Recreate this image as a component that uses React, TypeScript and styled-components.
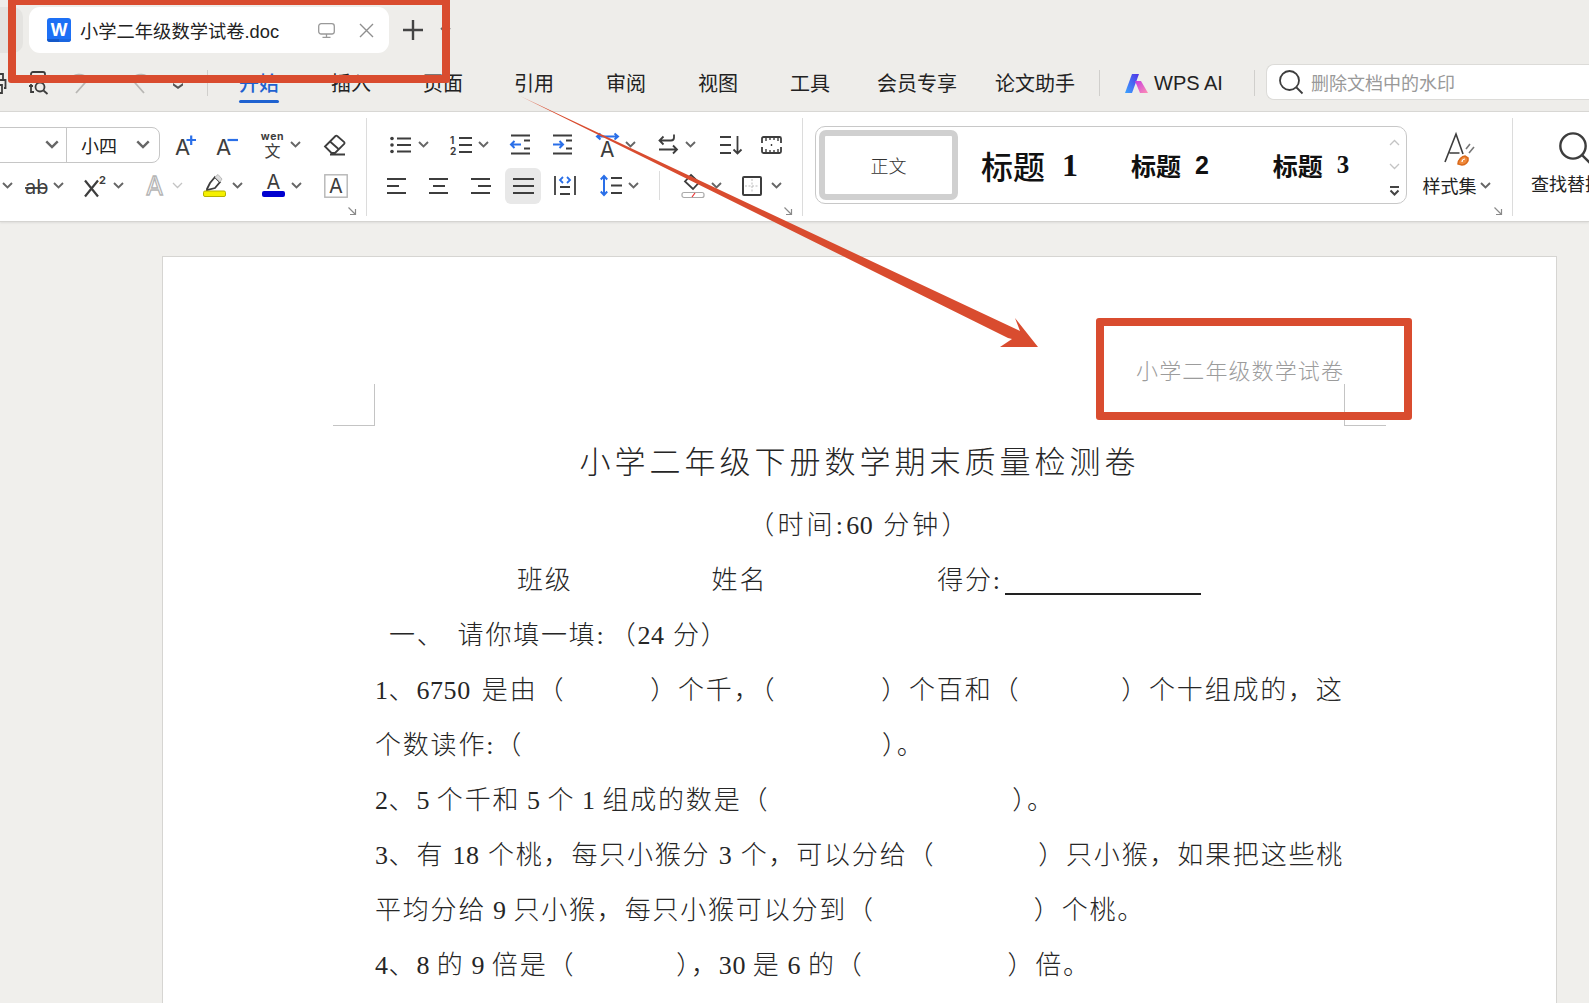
import React from "react";
import styled, { createGlobalStyle } from "styled-components";

const UI_FONT = `"Noto Sans CJK SC", "Liberation Sans", sans-serif`;
const DOC_FONT = `"Liberation Serif", "Noto Sans CJK SC", serif`;
const RED = "#d94c2f";
const INK = "#3d3d3d";
const BLUE = "#2a6fe8";

const GlobalStyle = createGlobalStyle`
  html, body { margin: 0; padding: 0; background: #f0efec; }
  body { font-family: ${UI_FONT}; overflow: hidden; }
  * { box-sizing: border-box; }
`;

/* ICONS */
const Svg = styled.svg`
  display: block;
  flex: none;
  overflow: visible;
  fill: none;
  stroke: ${INK};
  stroke-width: 1.8;
`;

const Chevron = ({ light, big, up }: { light?: boolean; big?: boolean; up?: boolean }) => (
  <Svg
    width={big ? 14 : 11}
    height={big ? 9 : 7}
    viewBox="0 0 11 7"
    style={{ stroke: light ? "#c4c4c4" : "#666", strokeWidth: light ? 1.3 : 1.9, transform: up ? "scaleY(-1)" : undefined }}
  >
    <path d="M1 1l4.5 4.5L10 1" />
  </Svg>
);

const LetterA = ({ size = 25, x = 0, y = 21, color = INK }: { size?: number; x?: number; y?: number; color?: string }) => (
  <text x={x} y={y} fontSize={size} fontFamily="Inter, sans-serif" fill={color} stroke="none">A</text>
);

const GrowIcon = () => (
  <Svg width="21" height="20" viewBox="0 0 21 20">
    <LetterA size={22} y={20} />
    <path d="M11.500 5h9.500M16.200 0.500v9.500" stroke={BLUE} strokeWidth="2.200" />
  </Svg>
);
const ShrinkIcon = () => (
  <Svg width="22" height="20" viewBox="0 0 22 20">
    <LetterA size={22} y={20} />
    <path d="M11.500 5h10.500" stroke={BLUE} strokeWidth="2.200" />
  </Svg>
);
const WenIcon = () => (
  <Svg width="23" height="24" viewBox="0 0 23 24">
    <text x="11.500" y="7" fontSize="10.500" fontWeight="700" letterSpacing="0.600" textAnchor="middle" fontFamily="Inter, sans-serif" fill={INK} stroke="none">wen</text>
    <text x="11.500" y="24" fontSize="16" textAnchor="middle" fontFamily={UI_FONT} fill={INK} stroke="none">文</text>
  </Svg>
);
const EraserIcon = () => (
  <Svg width="22" height="22" viewBox="0 0 22 22">
    <path d="M1 12.500L11.500 2a1.200 1.200 0 0 1 1.700 0l7 6.200a1.200 1.200 0 0 1 0 1.700L11 19H7.500z" />
    <path d="M6 7.500l8.500 7.500M6 20.500h15" />
  </Svg>
);
const ListIcon = () => (
  <Svg width="22" height="18" viewBox="0 0 22 18">
    <path d="M7 2.500h14M7 9h14M7 15.500h14" />
    <circle cx="2" cy="2.500" r="1.800" fill={INK} stroke="none" />
    <circle cx="2" cy="9" r="1.800" fill={INK} stroke="none" />
    <circle cx="2" cy="15.500" r="1.800" fill={INK} stroke="none" />
  </Svg>
);
const NumListIcon = () => (
  <Svg width="22" height="20" viewBox="0 0 22 20">
    <text x="0" y="9" fontSize="10" fontWeight="700" fontFamily="Inter, sans-serif" fill={INK} stroke="none">1</text>
    <text x="0" y="20" fontSize="10" fontWeight="700" fontFamily="Inter, sans-serif" fill={INK} stroke="none">2</text>
    <path d="M9 3h13M9 10h13M9 17h13" />
  </Svg>
);
const IndentIcon = ({ right }: { right?: boolean }) => (
  <Svg width="21" height="21" viewBox="0 0 21 21">
    <path d="M1 1.500h19M14 6.500h6M14 14.500h6M1 19.500h19" />
    {right ? (
      <path d="M1 10.500h10M7.500 7l3.500 3.500L7.500 14" stroke={BLUE} strokeWidth="2" />
    ) : (
      <path d="M11 10.500H1M4.500 7L1 10.500 4.500 14" stroke={BLUE} strokeWidth="2" />
    )}
  </Svg>
);
const TextDirIcon = () => (
  <Svg width="23" height="24" viewBox="0 0 23 24">
    <LetterA size={21} x={4} y={24} />
    <path d="M1 3.500h21M4.500 0.500L1 3.500l3.500 3M18.500 0.500l3.500 3-3.500 3" stroke={BLUE} strokeWidth="2" />
  </Svg>
);
const SwapIcon = () => (
  <Svg width="21" height="21" viewBox="0 0 21 21">
    <path d="M16 0.500v3a3 3 0 0 1-3 3H1.500M5.500 2.500l-4 4 4 4" />
    <path d="M1 15.500h18M15 11.500l4 4-4 4" />
  </Svg>
);
const SortIcon = () => (
  <Svg width="23" height="20" viewBox="0 0 23 20">
    <path d="M1 2h11M1 10h11M1 18h11M18.500 1v17.500M14.500 14.500l4 4 4-4" />
  </Svg>
);
const RulerIcon = () => (
  <Svg width="21" height="18" viewBox="0 0 21 18">
    <path d="M1 7V2.500A1.500 1.500 0 0 1 2.500 1h16A1.500 1.500 0 0 1 20 2.500V7M1 11v4.500A1.500 1.500 0 0 0 2.500 17h16a1.500 1.500 0 0 0 1.500-1.500V11" />
    <path d="M5 1v4M9 1v3M13 1v3M17 1v4M5 13v4M9 14v3M13 14v3M17 13v4M10.500 8v2" strokeWidth="1.400" />
  </Svg>
);
const AlignIcon = ({ mode }: { mode: "left" | "center" | "right" | "full" }) => {
  const mid = {
    left: "M1 9h12",
    center: "M5 9h12",
    right: "M8 9h13",
    full: "M1 9h21",
  }[mode];
  const w = mode === "full" ? 23 : 21;
  return (
    <Svg width={w} height="18" viewBox={`0 0 ${w} 18`} style={{ strokeWidth: 2 }}>
      <path d={`M1 2h${w - 2}M1 16h${w - 2}`} />
      <path d={mid} />
    </Svg>
  );
};
const DistributeIcon = () => (
  <Svg width="22" height="21" viewBox="0 0 22 21">
    <path d="M1 1v19M21 1v19M6 12h10M6 19h10" />
    <path d="M9 2L6 5l3 3M13 2l3 3-3 3" stroke={BLUE} />
  </Svg>
);
const LineSpaceIcon = () => (
  <Svg width="22" height="21" viewBox="0 0 22 21">
    <path d="M4 1v19M0.800 4.500L4 1l3.200 3.500M0.800 16.500L4 20l3.200-3.500" stroke={BLUE} strokeWidth="2" />
    <path d="M11 3h11M11 10.500h11M11 18h11" />
  </Svg>
);
const FillIcon = () => (
  <Svg width="24" height="24" viewBox="0 0 24 24">
    <path d="M10 1l8 7.500-6 6.500-8-7.500z" />
    <rect x="1" y="18.500" width="22" height="5" rx="2" stroke="#aaa" strokeWidth="1.200" />
    <path d="M14 19l-3 4" stroke="#e33" strokeWidth="1.200" />
  </Svg>
);
const BorderIcon = () => (
  <Svg width="20" height="20" viewBox="0 0 20 20" style={{ strokeWidth: 2 }}>
    <rect x="1" y="1" width="18" height="18" rx="1" />
    <path d="M10 3v14M3 10h14" stroke="#bbb" strokeWidth="1" strokeDasharray="2 1.500" />
  </Svg>
);
const StrikeIcon = () => (
  <Svg width="22" height="20" viewBox="0 0 22 20">
    <text x="0" y="18" fontSize="20" fontFamily="Inter, sans-serif" fill={INK} stroke="none">ab</text>
    <path d="M0 12h22" />
  </Svg>
);
const SuperIcon = () => (
  <Svg width="23" height="22" viewBox="0 0 23 22">
    <path d="M1 5.500l13 16M14 5.500l-13 16" strokeWidth="2.200" />
    <text x="15" y="9" fontSize="11" fontWeight="700" fontFamily="Inter, sans-serif" fill={INK} stroke="none">2</text>
  </Svg>
);
const OutlineAIcon = () => (
  <Svg width="20" height="22" viewBox="0 0 20 22">
    <text x="0" y="20" fontSize="25" fontFamily="Inter, sans-serif" fill="#fff" stroke="#b5b5b5" strokeWidth="1.300">A</text>
  </Svg>
);
const HighlightIcon = () => (
  <Svg width="23" height="23" viewBox="0 0 23 23">
    <path d="M4 15l3-6 5-6 5 5-5 6-8 2z" />
    <path d="M12 3l5 5 2-3-4-4.500z" fill="#ddd" stroke="#bbb" strokeWidth="1" />
    <rect x="0.500" y="17" width="22" height="5.500" rx="1.500" fill="#f5f000" stroke="#b6b000" strokeWidth="1" />
  </Svg>
);
const ColorAIcon = () => (
  <Svg width="23" height="23" viewBox="0 0 23 23">
    <LetterA size={20} x={4.500} y={15} />
    <rect x="0" y="17" width="23" height="6" rx="2" fill="#0000cf" stroke="none" />
  </Svg>
);
const BoxedAIcon = () => (
  <Svg width="24" height="24" viewBox="0 0 24 24">
    <rect x="0.800" y="0.800" width="22.400" height="22.400" stroke="#b5b5b5" strokeWidth="1.400" />
    <LetterA size={20} x={5} y={19} />
  </Svg>
);
const CornerIcon = () => (
  <Svg width="8" height="8" viewBox="0 0 8 8" style={{ stroke: "#8a8a8a", strokeWidth: 1.2 }}>
    <path d="M0.500 0.500l7 7M7.500 2v5.500H2" />
  </Svg>
);
const SearchIcon = ({ size = 24 }: { size?: number }) => (
  <Svg width={size} height={size} viewBox="0 0 24 24" style={{ strokeWidth: 1.8 }}>
    <circle cx="10.500" cy="10.500" r="9.500" />
    <path d="M17.500 17.500l6 6" />
  </Svg>
);
const WordLogo = () => (
  <Svg width="24" height="24" viewBox="0 0 24 24" style={{ stroke: "none" }}>
    <path d="M3 0h18a3 3 0 0 1 3 3v18a3 3 0 0 1-3 3H3a3 3 0 0 1-3-3V3a3 3 0 0 1 3-3z" fill="#1d70f5" />
    <path d="M0 21h12v3H3a3 3 0 0 1-3-3z" fill="#1458c8" />
    <path d="M12 21h12a3 3 0 0 1-3 3h-9z" fill="#1a66e0" />
    <text x="12" y="17.500" fontSize="17" fontWeight="700" textAnchor="middle" fontFamily="Inter, sans-serif" fill="#fff">W</text>
  </Svg>
);
const MonitorIcon = () => (
  <Svg width="17" height="15" viewBox="0 0 17 15" style={{ stroke: "#999", strokeWidth: 1.3 }}>
    <rect x="0.700" y="0.700" width="15.600" height="10.300" rx="2.500" />
    <path d="M8.500 11v3M4.500 14.300h8" />
  </Svg>
);
const CloseIcon = () => (
  <Svg width="15" height="15" viewBox="0 0 15 15" style={{ stroke: "#8f8f8f", strokeWidth: 1.4 }}>
    <path d="M1 1l13 13M14 1L1 14" />
  </Svg>
);
const PlusIcon = () => (
  <Svg width="20" height="20" viewBox="0 0 20 20" style={{ stroke: "#444", strokeWidth: 2.4 }}>
    <path d="M10 0v20M0 10h20" />
  </Svg>
);
const PrintIcon = () => (
  <Svg width="21" height="21" viewBox="0 0 21 21" style={{ marginLeft: -14 }}>
    <path d="M4 6V1h13v5M3 15H1.500V7h18v8H18M5 12h11v8H5z" />
  </Svg>
);
const PreviewIcon = () => (
  <Svg width="19" height="24" viewBox="0 0 19 24">
    <path d="M2 11V3A2 2 0 0 1 4 1h10a2 2 0 0 1 2 2v6" />
    <path d="M2 13v8h3M0 15h4" />
    <circle cx="11" cy="16" r="4.500" />
    <path d="M14.500 19.500l4 3.500" />
  </Svg>
);
const UndoIcon = ({ flip }: { flip?: boolean }) => (
  <Svg width="20" height="22" viewBox="0 0 20 22" style={{ stroke: "#b8b7b4", transform: flip ? "scaleX(-1)" : undefined }}>
    <path d="M1 7c2-5 12-6 16-1M17.500 8L6 21" />
  </Svg>
);
const TinyDown = () => (
  <Svg width="10" height="6" viewBox="0 0 10 6" style={{ stroke: "none", marginTop: 6 }}>
    <path d="M0 0l5 3.500L10 0v2.500L5 6 0 2.500z" fill="#555" />
  </Svg>
);
const AiLogo = () => (
  <Svg width="24" height="19" viewBox="0 0 24 19" style={{ stroke: "none" }}>
    <defs>
      <linearGradient id="aiA" x1="0" y1="1" x2="1" y2="0">
        <stop offset="0" stopColor="#3aa4ff" />
        <stop offset="1" stopColor="#5233e6" />
      </linearGradient>
      <linearGradient id="aiB" x1="0" y1="0" x2="1" y2="1">
        <stop offset="0" stopColor="#c43be0" />
        <stop offset="1" stopColor="#ff8fb4" />
      </linearGradient>
    </defs>
    <path d="M7 0h7L7 19H0z" fill="url(#aiA)" />
    <path d="M10 7h6l7 12h-8z" fill="url(#aiB)" />
  </Svg>
);
const MoreIcon = () => (
  <Svg width="11" height="10" viewBox="0 0 11 10" style={{ stroke: "#444", strokeWidth: 2 }}>
    <path d="M1 1h9M1.500 4.500L5.500 8.500l4-4" />
  </Svg>
);
const StyleSetIcon = () => (
  <Svg width="31" height="33" viewBox="0 0 31 33" style={{ strokeWidth: 1.6, marginLeft: 6 }}>
    <path d="M1 29L12 1l7 20M5.500 20h10" />
    <path d="M22 16l4-5M25 20l5-6" stroke="#777" />
    <path d="M14 31c0-4 4-8 7-8l3 2c1 4-3 7-6 7z" fill="#f08a3c" stroke="#d96a1c" />
    <path d="M18 29c0-2 2-3 3-3" stroke="#fff" strokeWidth="1.200" />
  </Svg>
);

/* PAGE PARTS */
const Window = styled.div`
  position: relative;
  width: 1589px;
  height: 1003px;
  overflow: hidden;
  display: flex;
  flex-direction: column;
  background: #f0efec;
`;

const TabBar = styled.div`
  height: 60px;
  flex: none;
  display: flex;
  align-items: center;
  background: #eeedea;
`;

const GhostTab = styled.div`
  width: 23px;
  height: 46px;
  border-radius: 0 10px 10px 0;
  background: #e4e3e0;
`;

const DocTab = styled.div`
  width: 360px;
  height: 46px;
  margin-left: 6px;
  padding: 0 15px 0 18px;
  display: flex;
  align-items: center;
  background: #fff;
  border-radius: 11px;
`;

const TabTitle = styled.span`
  margin-left: 9px;
  flex: 1;
  font-family: "Liberation Sans", "Noto Sans CJK SC", sans-serif;
  font-size: 18.300px;
  color: #222;
  white-space: nowrap;
`;

const TabClose = styled.span`
  margin-left: 24px;
  display: flex;
`;

const NewTab = styled.span`
  margin-left: 14px;
  display: flex;
`;

const NewTabMenu = styled.span`
  margin-left: 17px;
  display: flex;
`;

const MenuBar = styled.div`
  height: 51px;
  flex: none;
  display: flex;
  align-items: center;
  padding-bottom: 5px;
  background: #eeedea;
  font-size: 20px;
  color: #222;
`;

const QuickGroup = styled.div`
  width: 207px;
  flex: none;
  display: flex;
  align-items: center;
`;

const QuickGap = styled.span<{ $w: number }>`
  width: ${({ $w }) => $w}px;
  flex: none;
`;

const MenuDivider = styled.span<{ $left: number; $right: number }>`
  width: 1px;
  height: 26px;
  flex: none;
  background: #d0cfcc;
  margin: 0 ${({ $right }) => $right}px 0 ${({ $left }) => $left}px;
`;

const MenuItem = styled.span<{ $active?: boolean; $gap: number }>`
  position: relative;
  margin-left: ${({ $gap }) => $gap}px;
  line-height: 40px;
  white-space: nowrap;
  color: ${({ $active }) => ($active ? "#1f62d0" : "#222")};
  font-weight: ${({ $active }) => ($active ? 500 : 400)};
  &::after {
    content: "";
    display: ${({ $active }) => ($active ? "block" : "none")};
    position: absolute;
    left: 0;
    right: 0;
    bottom: 0;
    height: 3px;
    border-radius: 2px;
    background: #1f62d0;
  }
`;

const AiItem = styled.span`
  display: flex;
  align-items: center;
  gap: 5px;
  font-family: "Liberation Sans", sans-serif;
  font-size: 20px;
  white-space: nowrap;
  color: #222;
`;

const SearchBox = styled.div`
  flex: 1;
  height: 36px;
  margin-top: -3px;
  display: flex;
  align-items: center;
  gap: 8px;
  padding-left: 12px;
  background: #fff;
  border: 1px solid #dcdbd8;
  border-right: none;
  border-radius: 8px 0 0 8px;
  color: #999;
  font-size: 18px;
  white-space: nowrap;
`;

const Ribbon = styled.div`
  height: 111px;
  flex: none;
  display: flex;
  background: #fff;
  border-top: 1px solid #d8d7d4;
  border-bottom: 1px solid #d5d4d1;
  box-shadow: 0 1px 2px rgba(0, 0, 0, 0.08);
  position: relative;
  overflow: hidden;
`;

const Group = styled.div<{ $w: number }>`
  position: relative;
  width: ${({ $w }) => $w}px;
  flex: none;
  margin: 6px 0 5px;
  padding-top: 6px;
  display: flex;
  flex-direction: column;
  border-right: 1px solid #dcdcdc;
`;

const Row = styled.div<{ $left?: number }>`
  height: 41px;
  display: flex;
  align-items: center;
  padding-left: ${({ $left }) => $left ?? 0}px;
`;

const Tool = styled.span<{ $w: number; $on?: boolean; $ml?: number; $gap?: number }>`
  width: ${({ $w }) => $w}px;
  height: 36px;
  margin-left: ${({ $ml }) => $ml ?? 0}px;
  flex: none;
  display: flex;
  align-items: center;
  justify-content: center;
  gap: ${({ $gap }) => $gap ?? 6}px;
  border-radius: 6px;
  background: ${({ $on }) => ($on ? "#e8e8e8" : "transparent")};
`;

const ToolDivider = styled.span`
  width: 1px;
  height: 29px;
  flex: none;
  margin: 0 11px 0 8px;
  background: #dcdcdc;
`;

const FontBox = styled.div`
  width: 170px;
  height: 36px;
  margin: 0 4px 0 -10px;
  flex: none;
  display: flex;
  align-items: center;
  border: 1px solid #c6c6c6;
  border-radius: 8px;
`;

const FontName = styled.span`
  width: 76px;
  height: 100%;
  padding-right: 7px;
  display: flex;
  align-items: center;
  justify-content: flex-end;
  border-right: 1px solid #c6c6c6;
`;

const FontSize = styled.span`
  flex: 1;
  padding: 0 9px 0 14px;
  display: flex;
  align-items: center;
  justify-content: space-between;
  font-size: 18px;
  color: #222;
`;

const CornerMark = styled.span`
  position: absolute;
  right: 10px;
  bottom: 1px;
`;

const Gallery = styled.div`
  width: 592px;
  height: 78px;
  margin: 14px 0 0 12px;
  flex: none;
  display: flex;
  align-items: center;
  border: 1px solid #c8c8c8;
  border-radius: 10px;
  padding-left: 3px;
`;

const CurrentStyle = styled.div`
  width: 139px;
  height: 70px;
  flex: none;
  display: flex;
  align-items: center;
  justify-content: center;
  border: 6px solid #d0d0d0;
  border-radius: 7px;
  font-family: ${DOC_FONT};
  font-size: 18px;
  font-weight: 300;
  color: #333;
`;

const StyleItem = styled.span<{ $w: number; $size: number }>`
  width: ${({ $w }) => $w}px;
  flex: none;
  display: flex;
  align-items: center;
  justify-content: center;
  gap: ${({ $size }) => ($size > 30 ? 17 : 14)}px;
  font-family: "Noto Sans CJK SC", serif;
  font-size: ${({ $size }) => $size}px;
  font-weight: ${({ $size }) => ($size > 30 ? 500 : 700)};
  color: #111;
  white-space: nowrap;
`;

const StyleDigit = styled.span<{ $sans?: boolean }>`
  font-family: ${({ $sans }) => ($sans ? `"Liberation Sans"` : `"Liberation Serif"`)}, serif;
  font-weight: 700;
`;

const GalleryScroll = styled.div`
  margin-left: auto;
  width: 26px;
  height: 100%;
  padding: 12px 3px 7px 0;
  flex: none;
  display: flex;
  flex-direction: column;
  align-items: center;
  justify-content: space-between;
`;

const StyleSet = styled.div`
  width: 106px;
  flex: none;
  margin: 6px 0 5px;
  position: relative;
  padding: 15px 6px 0 0;
  display: flex;
  flex-direction: column;
  align-items: center;
  border-right: 1px solid #dcdcdc;
`;

const ToolLabel = styled.span`
  margin-top: 6px;
  display: flex;
  align-items: center;
  gap: 3px;
  font-size: 18px;
  line-height: 26px;
  color: #222;
  white-space: nowrap;
`;

const FindTool = styled.div`
  padding: 20px 0 0 18px;
  flex: none;
  display: flex;
  flex-direction: column;
  align-items: flex-start;
`;

const FindIconWrap = styled.span`
  margin-left: 28px;
  display: flex;
`;

const Canvas = styled.div`
  flex: 1;
  min-height: 0;
  padding: 34px 0 0 162px;
`;

const Sheet = styled.div`
  position: relative;
  width: 1395px;
  height: 780px;
  padding: 100px 212px 0;
  background: #fff;
  border: 1px solid #d6d5d2;
  border-bottom: none;
  font-family: ${DOC_FONT};
  color: #262626;
  font-weight: 300;
`;

const CropMark = styled.span<{ $side: "left" | "right" }>`
  position: absolute;
  top: 127px;
  width: 42px;
  height: 42px;
  border-bottom: 1px solid #c4c4c4;
  ${({ $side }) =>
    $side === "left"
      ? "left: 170px; border-right: 1px solid #c4c4c4;"
      : "right: 170px; border-left: 1px solid #c4c4c4;"}
`;

const HeaderText = styled.div`
  text-align: right;
  height: 30px;
  line-height: 30px;
  font-size: 22px;
  letter-spacing: 1.100px;
  color: #9c9c9c;
`;

const Title = styled.h1`
  margin: 48px 0 0;
  height: 55px;
  line-height: 55px;
  text-align: center;
  font-size: 31px;
  font-weight: 300;
  letter-spacing: 4px;
  white-space: pre;
`;

const SubTitle = styled.div`
  margin-top: 8px;
  height: 55px;
  line-height: 55px;
  text-align: center;
  font-size: 26px;
  letter-spacing: 3.200px;
  white-space: pre;
`;

const Line = styled.p<{ $tight?: boolean }>`
  margin: 0;
  height: 55px;
  line-height: 55px;
  font-size: 26px;
  letter-spacing: 1.800px;
  word-spacing: ${({ $tight }) => ($tight ? "-1.5px" : "0")};
  white-space: pre;
`;

const Blank = styled.span<{ $w: number }>`
  display: inline-block;
  width: ${({ $w }) => $w}px;
`;

const Num = styled.span`
  letter-spacing: 0.600px;
`;

const FillLine = styled.span`
  display: inline-block;
  width: 196px;
  height: 2px;
  margin-left: 3px;
  background: #222;
  vertical-align: -6px;
`;

/* the annotation drawn on top of the screenshot */
const RedFrame = styled.div`
  position: absolute;
  border: 8px solid ${RED};
  border-radius: 3px;
  pointer-events: none;
`;

const TabsFrame = styled(RedFrame)`
  left: 8px;
  top: -3px;
  width: 442px;
  height: 86px;
`;

const HeaderFrame = styled(RedFrame)`
  left: 1096px;
  top: 318px;
  width: 316px;
  height: 102px;
`;

const Arrow = styled.svg`
  position: absolute;
  left: 0;
  top: 0;
  pointer-events: none;
`;

const App = () => {
  return (
    <Window>
      <GlobalStyle />
      <TabBar>
        <GhostTab />
        <DocTab>
          <WordLogo />
          <TabTitle>小学二年级数学试卷.doc</TabTitle>
          <MonitorIcon />
          <TabClose>
            <CloseIcon />
          </TabClose>
        </DocTab>
        <NewTab>
          <PlusIcon />
        </NewTab>
        <NewTabMenu>
          <Chevron />
        </NewTabMenu>
      </TabBar>

      <MenuBar>
        <QuickGroup>
          <PrintIcon />
          <QuickGap $w={22} />
          <PreviewIcon />
          <QuickGap $w={22} />
          <UndoIcon />
          <QuickGap $w={40} />
          <UndoIcon flip />
          <QuickGap $w={23} />
          <TinyDown />
        </QuickGroup>
        <MenuDivider $left={0} $right={0} />
        <MenuItem $active $gap={31}>开始</MenuItem>
        <MenuItem $gap={52}>插入</MenuItem>
        <MenuItem $gap={52}>页面</MenuItem>
        <MenuItem $gap={51}>引用</MenuItem>
        <MenuItem $gap={52}>审阅</MenuItem>
        <MenuItem $gap={52}>视图</MenuItem>
        <MenuItem $gap={52}>工具</MenuItem>
        <MenuItem $gap={47}>会员专享</MenuItem>
        <MenuItem $gap={38}>论文助手</MenuItem>
        <MenuDivider $left={24} $right={25} />
        <AiItem>
          <AiLogo />
          WPS AI
        </AiItem>
        <MenuDivider $left={31} $right={11} />
        <SearchBox>
          <SearchIcon />
          删除文档中的水印
        </SearchBox>
      </MenuBar>

      <Ribbon>
        <Group $w={367}>
          <Row>
            <FontBox>
              <FontName>
                <Chevron big />
              </FontName>
              <FontSize>
                小四
                <Chevron big />
              </FontSize>
            </FontBox>
            <Tool $w={42}><GrowIcon /></Tool>
            <Tool $w={42}><ShrinkIcon /></Tool>
            <Tool $w={66}>
              <WenIcon />
              <Chevron />
            </Tool>
            <Tool $w={42}><EraserIcon /></Tool>
          </Row>
          <Row $left={0}>
            <Tool $w={14}><Chevron /></Tool>
            <Tool $w={60}><StrikeIcon /><Chevron /></Tool>
            <Tool $w={60}><SuperIcon /><Chevron /></Tool>
            <Tool $w={60}><OutlineAIcon /><Chevron light /></Tool>
            <Tool $w={58}><HighlightIcon /><Chevron /></Tool>
            <Tool $w={60}><ColorAIcon /><Chevron /></Tool>
            <Tool $w={48}><BoxedAIcon /></Tool>
          </Row>
          <CornerMark><CornerIcon /></CornerMark>
        </Group>
        <Group $w={436}>
          <Row $left={12}>
            <Tool $w={60}><ListIcon /><Chevron /></Tool>
            <Tool $w={60}><NumListIcon /><Chevron /></Tool>
            <Tool $w={42}><IndentIcon /></Tool>
            <Tool $w={42}><IndentIcon right /></Tool>
            <Tool $w={66}><TextDirIcon /><Chevron /></Tool>
            <Tool $w={56}><SwapIcon /><Chevron /></Tool>
            <Tool $w={50}><SortIcon /></Tool>
            <Tool $w={32}><RulerIcon /></Tool>
          </Row>
          <Row $left={8}>
            <Tool $w={42}><AlignIcon mode="left" /></Tool>
            <Tool $w={42}><AlignIcon mode="center" /></Tool>
            <Tool $w={42}><AlignIcon mode="right" /></Tool>
            <Tool $w={36} $ml={4} $on><AlignIcon mode="full" /></Tool>
            <Tool $w={44} $ml={2}><DistributeIcon /></Tool>
            <Tool $w={64}><LineSpaceIcon /><Chevron /></Tool>
            <ToolDivider />
            <Tool $w={60}><FillIcon /><Chevron /></Tool>
            <Tool $w={62} $gap={9}><BorderIcon /><Chevron /></Tool>
          </Row>
          <CornerMark><CornerIcon /></CornerMark>
        </Group>
        <Gallery>
          <CurrentStyle>正文</CurrentStyle>
          <StyleItem $w={143} $size={32}>
            标题<StyleDigit>1</StyleDigit>
          </StyleItem>
          <StyleItem $w={138} $size={25}>
            标题<StyleDigit $sans>2</StyleDigit>
          </StyleItem>
          <StyleItem $w={144} $size={25}>
            标题<StyleDigit>3</StyleDigit>
          </StyleItem>
          <GalleryScroll>
            <Chevron light up />
            <Chevron light />
            <MoreIcon />
          </GalleryScroll>
        </Gallery>
        <StyleSet>
          <StyleSetIcon />
          <ToolLabel>
            样式集
            <Chevron />
          </ToolLabel>
          <CornerMark><CornerIcon /></CornerMark>
        </StyleSet>
        <FindTool>
          <FindIconWrap>
            <SearchIcon size={32} />
          </FindIconWrap>
          <ToolLabel>查找替换</ToolLabel>
        </FindTool>
      </Ribbon>

      <Canvas>
        <Sheet>
          <CropMark $side="left" />
          <CropMark $side="right" />
          <HeaderText>小学二年级数学试卷</HeaderText>
          <Title>小学二年级下册数学期末质量检测卷</Title>
          <SubTitle>（时间:<Num>60</Num> 分钟）</SubTitle>
          <Line>
            <Blank $w={142} />班级<Blank $w={139} />姓名<Blank $w={170} />得分:<FillLine />
          </Line>
          <Line>
            <Blank $w={14} />一、<Blank $w={13} />请你填一填:<Blank $w={4} />（<Num>24</Num> 分）
          </Line>
          <Line>
            <Num>1</Num>、<Num>6750</Num><Blank $w={11} />是由（<Blank $w={85} />）个千，（<Blank $w={105} />）个百和（<Blank $w={101} />）个十组成的，这
          </Line>
          <Line>
            个数读作:（<Blank $w={359} />）。
          </Line>
          <Line $tight>
            <Num>2</Num>、<Num>5</Num> 个千和 <Num>5</Num> 个 <Num>1</Num> 组成的数是（<Blank $w={243} />）。
          </Line>
          <Line>
            <Num>3</Num>、有 <Num>18</Num> 个桃，每只小猴分 <Num>3</Num> 个，可以分给（<Blank $w={103} />）只小猴，如果把这些桃
          </Line>
          <Line $tight>
            平均分给 <Num>9</Num> 只小猴，每只小猴可以分到（<Blank $w={159} />）个桃。
          </Line>
          <Line $tight>
            <Num>4</Num>、<Num>8</Num> 的 <Num>9</Num> 倍是（<Blank $w={101} />），<Num>30</Num> 是 <Num>6</Num> 的（<Blank $w={144} />）倍。
          </Line>
        </Sheet>
      </Canvas>

      <TabsFrame />
      <HeaderFrame />
      <Arrow width="1589" height="1003" viewBox="0 0 1589 1003">
        <polygon points="520,96 1020,331 1015,318 1038,347 1000,347 1012,339 1008,338" fill={RED} />
      </Arrow>
    </Window>
  );
};

export default App;
